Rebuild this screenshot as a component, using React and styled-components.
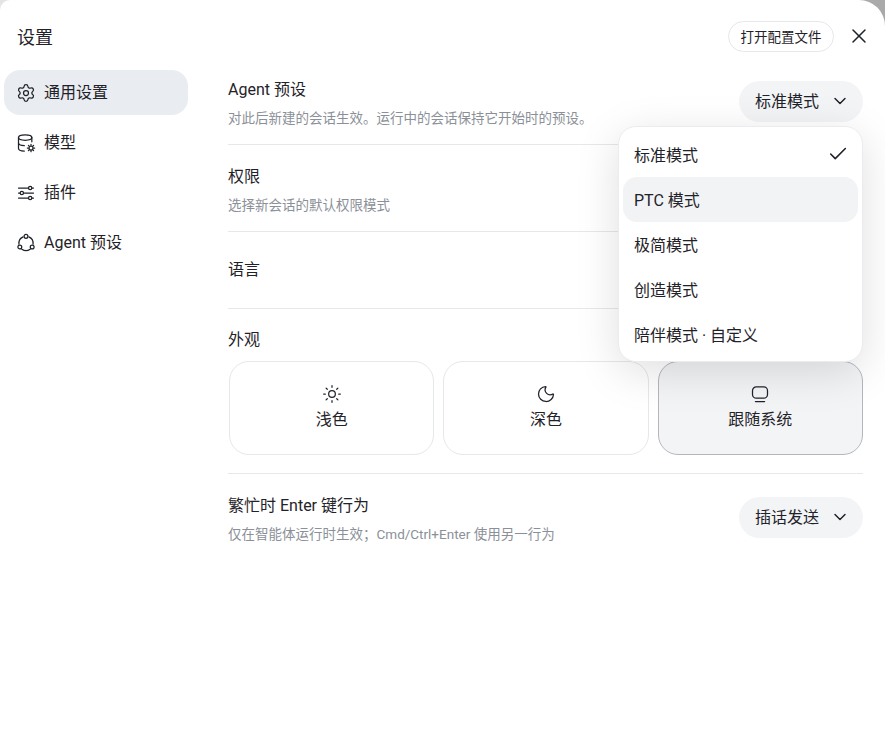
import React from 'react'
import styled, { createGlobalStyle } from 'styled-components'
import { Settings, Sun, Moon, Check, X, ChevronDown } from 'lucide-react'

const GlobalStyle = createGlobalStyle`
  html, body {
    margin: 0;
    padding: 0;
    height: 100%;
    background: linear-gradient(90deg, #e4e4e4, #a9a9a9);
  }
  body {
    font-family: Roboto, "Noto Sans CJK SC", sans-serif;
    color: #1f2329;
  }
  * {
    box-sizing: border-box;
  }
`

const Modal = styled.div`
  width: 885px;
  height: 730px;
  overflow: hidden;
  background: #fff;
  border-radius: 10px 26px 0 0;
`
const Header = styled.header`
  display: flex;
  align-items: center;
  justify-content: space-between;
  height: 70px;
  padding: 2px 14px 0 17px;
`
const Title = styled.h1`
  margin: 0;
  font-size: 18px;
  font-weight: 400;
`
const HeaderActions = styled.div`
  display: flex;
  align-items: center;
  gap: 13px;
`
const ConfigButton = styled.button`
  height: 31px;
  padding: 0 11.5px;
  color: inherit;
  font: inherit;
  font-size: 13.5px;
  border-radius: 16px;
  background: #fff;
  border: solid 1px #e5e7eb;
`
const CloseButton = styled.button`
  display: flex;
  padding: 0;
  color: inherit;
  background: none;
  border: 0;
`
const Body = styled.div`
  display: flex;
  gap: 40px;
  padding: 0 22px 0 4px;
`
const Sidebar = styled.nav`
  display: flex;
  flex-direction: column;
  flex: none;
  gap: 5px;
  width: 184px;
`
const NavItem = styled.div`
  display: flex;
  align-items: center;
  gap: 8px;
  height: 45px;
  padding: 0 0 3px 12px;
  font-size: 16px;
  border-radius: 16px;
  background: ${props => props.$active ? '#e9edf2' : 'transparent'};

  svg {
    margin-top: 3px;
  }
`
const Content = styled.main`
  flex: 1;
  min-width: 0;
`
const Row = styled.section`
  display: flex;
  align-items: center;
  justify-content: space-between;
  padding: 20px 0 17px;
  border-bottom: solid 1px #e5e7eb;

  &:first-child {
    padding-top: 8px;
  }
  &:last-child {
    border-bottom: 0;
  }
`
const SingleRow = styled(Row)`
  min-height: 77px;
  padding: 0 0 1px;
`
const RowTitle = styled.div`
  padding-top: 1px;
  font-size: 16px;
  line-height: 22px;
`
const RowHint = styled.div`
  margin-top: 8px;
  color: #8b9098;
  font-size: 13.5px;
  line-height: 18px;
`
const SelectWrap = styled.div`
  position: relative;
  margin-bottom: 3px;
`
const Select = styled.button`
  display: flex;
  align-items: center;
  gap: 11px;
  height: 41px;
  padding: 0 13px 2px 16px;
  color: inherit;
  font: inherit;
  font-size: 16px;
  border: 0;
  border-radius: 21px;
  background: #f3f4f6;

  svg {
    margin-top: 2px;
  }
`
const Menu = styled.ul`
  position: absolute;
  z-index: 10;
  top: calc(100% + 4px);
  right: 0;
  width: 245px;
  margin: 0;
  padding: 5px 4px 4px;
  list-style: none;
  background: #fff;
  border: solid 1px #ebecef;
  border-radius: 18px;
  box-shadow: 0 10px 44px rgba(0, 0, 0, 0.13);
`
const MenuItem = styled.li`
  display: flex;
  align-items: center;
  justify-content: space-between;
  height: 45px;
  padding: 0 9px 0 11px;
  font-size: 16px;
  border-radius: 14px;
  background: ${props => props.$hover ? '#f2f3f5' : 'transparent'};
`
const AppearanceSection = styled.section`
  padding: 19px 0 18px;
  border-bottom: solid 1px #e5e7eb;
`
const ThemeGrid = styled.div`
  display: grid;
  grid-template-columns: repeat(3, 1fr);
  gap: 9px;
  margin-top: 10px;
  padding-left: 1px;
`
const ThemeCard = styled.button`
  display: flex;
  flex-direction: column;
  align-items: center;
  gap: 5px;
  height: 94px;
  padding: 22px 0 0;
  color: inherit;
  font: inherit;
  font-size: 16px;
  line-height: 22px;
  border-radius: 20px;
  background: ${props => props.$selected ? '#f3f4f6' : '#fff'};
  border: solid 1px ${props => props.$selected ? '#b3b7bd' : '#e5e7eb'};
`

const Icon = styled.svg.attrs({
  viewBox: '0 0 24 24',
  fill: 'none',
  stroke: 'currentColor',
  strokeWidth: 1.5,
  strokeLinecap: 'round',
  strokeLinejoin: 'round',
})`
  flex: none;
  width: 20px;
  height: 20px;
`

const DatabaseGear = () => (
  <Icon>
    <ellipse cx="11" cy="5.5" rx="8" ry="3.2" />
    <path d="M3 5.5v13c0 1.7 3 3 7 3.2" />
    <path d="M3 12c0 1.7 3 3 7 3.2" />
    <path d="M19 5.5v5" />
    <circle cx="18" cy="18" r="2.4" />
    <path d="M18 13.6v1.2M18 21.2v1.2M13.6 18h1.2M21.2 18h1.2M14.9 14.9l.9.9M20.2 20.2l.9.9M14.9 21.1l.9-.9M20.2 15.8l.9-.9" />
  </Icon>
)

const Sliders = () => (
  <Icon>
    <path d="M3 6h12M19 6h2M3 12h2M9 12h12M3 18h12M19 18h2" />
    <circle cx="17" cy="6" r="2" />
    <circle cx="7" cy="12" r="2" />
    <circle cx="17" cy="18" r="2" />
  </Icon>
)

const AgentNodes = () => (
  <Icon>
    <circle cx="12" cy="4" r="2.3" />
    <circle cx="4.6" cy="16.7" r="2.3" />
    <circle cx="19.4" cy="16.7" r="2.3" />
    <path d="M15.46 4.73A8.5 8.5 0 0 1 20.45 13.39" />
    <path d="M17 19.38A8.5 8.5 0 0 1 7 19.38" />
    <path d="M3.55 13.39A8.5 8.5 0 0 1 8.54 4.73" />
  </Icon>
)

const MonitorIcon = () => (
  <Icon>
    <rect x="3" y="3.5" width="18" height="13.5" rx="4.5" />
    <path d="M6.5 21h11" />
  </Icon>
)

const navItems = [
  { label: '通用设置', icon: <Settings size={20} strokeWidth={1.5} />, active: true },
  { label: '模型', icon: <DatabaseGear /> },
  { label: '插件', icon: <Sliders /> },
  { label: 'Agent 预设', icon: <AgentNodes /> },
]

const presets = ['标准模式', 'PTC 模式', '极简模式', '创造模式', '陪伴模式 · 自定义']

const themes = [
  { label: '浅色', icon: <Sun size={20} strokeWidth={1.5} /> },
  { label: '深色', icon: <Moon size={20} strokeWidth={1.5} /> },
  { label: '跟随系统', icon: <MonitorIcon />, selected: true },
]

const App = () => (
  <Modal>
    <GlobalStyle />
    <Header>
      <Title>设置</Title>
      <HeaderActions>
        <ConfigButton>打开配置文件</ConfigButton>
        <CloseButton><X size={24} strokeWidth={1.5} /></CloseButton>
      </HeaderActions>
    </Header>
    <Body>
      <Sidebar>
        {navItems.map(item => (
          <NavItem key={item.label} $active={item.active}>
            {item.icon}
            {item.label}
          </NavItem>
        ))}
      </Sidebar>
      <Content>
        <Row>
          <div>
            <RowTitle>Agent 预设</RowTitle>
            <RowHint>对此后新建的会话生效。运行中的会话保持它开始时的预设。</RowHint>
          </div>
          <SelectWrap>
            <Select>标准模式<ChevronDown size={20} strokeWidth={1.75} /></Select>
            <Menu>
              {presets.map((preset, i) => (
                <MenuItem key={preset} $hover={i === 1}>
                  {preset}
                  {i === 0 && <Check size={22} strokeWidth={1.75} />}
                </MenuItem>
              ))}
            </Menu>
          </SelectWrap>
        </Row>
        <Row>
          <div>
            <RowTitle>权限</RowTitle>
            <RowHint>选择新会话的默认权限模式</RowHint>
          </div>
        </Row>
        <SingleRow>
          <RowTitle>语言</RowTitle>
        </SingleRow>
        <AppearanceSection>
          <RowTitle>外观</RowTitle>
          <ThemeGrid>
            {themes.map(theme => (
              <ThemeCard key={theme.label} $selected={theme.selected}>
                {theme.icon}
                {theme.label}
              </ThemeCard>
            ))}
          </ThemeGrid>
        </AppearanceSection>
        <Row>
          <div>
            <RowTitle>繁忙时 Enter 键行为</RowTitle>
            <RowHint>仅在智能体运行时生效；Cmd/Ctrl+Enter 使用另一行为</RowHint>
          </div>
          <SelectWrap>
            <Select>插话发送<ChevronDown size={20} strokeWidth={1.75} /></Select>
          </SelectWrap>
        </Row>
      </Content>
    </Body>
  </Modal>
)

export default App
